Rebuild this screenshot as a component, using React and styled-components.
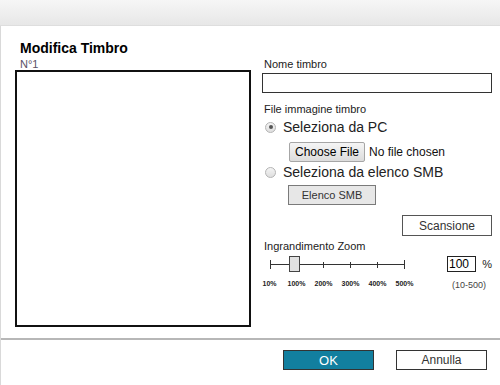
import React from "react";
import styled, { createGlobalStyle } from "styled-components";

const GlobalStyle = createGlobalStyle`
  html, body {
    margin: 0;
    padding: 0;
    background: #fff;
  }
  body {
    font-family: "Liberation Sans", Arial, sans-serif;
    color: #222;
  }
  * {
    box-sizing: border-box;
  }
`;

const Page = styled.div`
  width: 500px;
  height: 385px;
  display: flex;
  flex-direction: column;
  overflow: hidden;
`;

const TopBar = styled.div`
  height: 26px;
  flex: none;
  background: linear-gradient(#f6f6f6, #e7e7e7);
  border-bottom: 1px solid #dedede;
`;

const Body = styled.div`
  flex: 1;
  display: flex;
  flex-direction: column;
  border-left: 1px solid #d9d9d9;
`;

const Content = styled.div`
  padding: 14px 0 0 14px;
`;

const Title = styled.h1`
  margin: 0;
  padding-left: 5px;
  font-size: 14px;
  line-height: 16px;
  font-weight: bold;
  color: #000;
`;

const Columns = styled.div`
  display: grid;
  grid-template-columns: 236px 230px;
  column-gap: 11px;
`;

const LeftCol = styled.div`
  display: flex;
  flex-direction: column;
`;

const StampNumber = styled.div`
  margin-top: 2px;
  padding-left: 5px;
  font-size: 11px;
  line-height: 12px;
  color: #5a5266;
`;

const Preview = styled.div`
  width: 236px;
  height: 257px;
  border: 2px solid #111;
  background: #fff;
`;

const RightCol = styled.div`
  display: flex;
  flex-direction: column;
`;

const FieldLabel = styled.div`
  margin-top: ${(p) => p.$top || 0}px;
  padding-left: 2px;
  font-size: 11px;
  line-height: 12px;
  color: #222;
`;

const TextInput = styled.div`
  margin-top: 3px;
  height: 20px;
  border: 1px solid #333;
  background: #fff;
`;

const RadioRow = styled.div`
  margin-top: ${(p) => p.$top}px;
  display: flex;
  align-items: center;
  gap: 7px;
  padding-left: 3px;
  height: 16px;
  font-size: 14px;
  line-height: 16px;
  color: #222;
`;

const Radio = styled.span`
  position: relative;
  width: 11px;
  height: 11px;
  flex: none;
  border-radius: 50%;
  border: 1px solid #b4b4b4;
  background: linear-gradient(#f4f4f4, #dedede);

  &::after {
    content: "";
    display: ${(p) => (p.$checked ? "block" : "none")};
    position: absolute;
    left: 2.5px;
    top: 2.5px;
    width: 4px;
    height: 4px;
    border-radius: 50%;
    background: #555;
  }
`;

const FileRow = styled.div`
  margin-top: 7px;
  padding-left: 27px;
  display: flex;
  align-items: center;
  gap: 4px;
  font-size: 12px;
  color: #111;
`;

const NativeButton = styled.button`
  height: 20px;
  width: 76px;
  padding: 0;
  border: 1px solid #a6a6a6;
  border-radius: 2px;
  background: linear-gradient(#f5f5f5, #dcdcdc);
  font-family: "Liberation Sans", Arial, sans-serif;
  font-size: 12px;
  color: #000;
`;

const FlatButton = styled.button`
  width: ${(p) => p.$width}px;
  height: ${(p) => p.$height || 20}px;
  padding: 0;
  border: 1px solid ${(p) => p.$border || "#555"};
  background: ${(p) => p.$bg || "#fff"};
  font-family: "Liberation Sans", Arial, sans-serif;
  font-size: ${(p) => p.$size || 11}px;
  color: ${(p) => p.$color || "#333"};
`;

const SmbRow = styled.div`
  margin-top: 5px;
  padding-left: 26px;
`;

const ScanRow = styled.div`
  margin-top: 10px;
  display: flex;
  justify-content: flex-end;
`;

const ZoomGrid = styled.div`
  margin-top: 4px;
  display: grid;
  grid-template-columns: 1fr 45px;
`;

const SliderCol = styled.div`
  display: flex;
  flex-direction: column;
  padding-left: 7px;
`;

const Scale = styled.div`
  margin: 7px 0 0 -13px;
  display: grid;
  grid-template-columns: repeat(6, 27px);
  font-size: 7px;
  line-height: 8px;
  font-weight: bold;
  color: #222;
  text-align: center;
`;

const ZoomCol = styled.div`
  display: flex;
  flex-direction: column;
`;

const ZoomInputRow = styled.div`
  display: flex;
  align-items: center;
  gap: 6px;
  font-size: 11px;
  color: #222;
`;

const ZoomInput = styled.div`
  width: 32px;
  height: 16px;
  border: 1px solid #222;
  padding-left: 1px;
  font-size: 12px;
  line-height: 14px;
  color: #000;
`;

const Range = styled.div`
  margin-top: 8px;
  padding-left: 5px;
  font-size: 9px;
  line-height: 10px;
  color: #444;
`;

const Separator = styled.div`
  margin-top: 11px;
  height: 2px;
  background: #b7b7b7;
`;

const Footer = styled.div`
  padding: 10px 13px 0 0;
  display: flex;
  justify-content: flex-end;
  gap: 22px;
`;

const Slider = () => (
  <svg width="140" height="17" viewBox="0 0 140 17">
    <g stroke="#333" strokeWidth="1" shapeRendering="crispEdges">
      <line x1="1" y1="8.5" x2="136" y2="8.5" />
      <line x1="1.5" y1="4" x2="1.5" y2="13" />
      <line x1="135.5" y1="4" x2="135.5" y2="13" />
      {[54, 81, 108].map((x) => (
        <line key={x} x1={x + 0.5} y1="6" x2={x + 0.5} y2="12" />
      ))}
    </g>
    <rect x="20.5" y="0.5" width="10" height="15" fill="#e2e2e2" stroke="#444" />
  </svg>
);

const scaleLabels = ["10%", "100%", "200%", "300%", "400%", "500%"];

export default function App() {
  return (
    <Page>
      <GlobalStyle />
      <TopBar />
      <Body>
        <Content>
          <Title>Modifica Timbro</Title>
          <Columns>
            <LeftCol>
              <StampNumber>N°1</StampNumber>
              <Preview />
            </LeftCol>
            <RightCol>
              <FieldLabel $top={2}>Nome timbro</FieldLabel>
              <TextInput />
              <FieldLabel $top={10}>File immagine timbro</FieldLabel>
              <RadioRow $top={4}>
                <Radio $checked />
                Seleziona da PC
              </RadioRow>
              <FileRow>
                <NativeButton>Choose File</NativeButton>
                No file chosen
              </FileRow>
              <RadioRow $top={2}>
                <Radio />
                Seleziona da elenco SMB
              </RadioRow>
              <SmbRow>
                <FlatButton $width={88} $bg="#e7e7e7" $border="#7a7a7a">
                  Elenco SMB
                </FlatButton>
              </SmbRow>
              <ScanRow>
                <FlatButton $width={90} $height={21} $size={12}>
                  Scansione
                </FlatButton>
              </ScanRow>
              <FieldLabel $top={4}>Ingrandimento Zoom</FieldLabel>
              <ZoomGrid>
                <SliderCol>
                  <Slider />
                  <Scale>
                    {scaleLabels.map((l) => (
                      <span key={l}>{l}</span>
                    ))}
                  </Scale>
                </SliderCol>
                <ZoomCol>
                  <ZoomInputRow>
                    <ZoomInput>100</ZoomInput>%
                  </ZoomInputRow>
                  <Range>(10-500)</Range>
                </ZoomCol>
              </ZoomGrid>
            </RightCol>
          </Columns>
        </Content>
        <Separator />
        <Footer>
          <FlatButton $width={91} $bg="#127f9f" $border="#333" $color="#fff" $size={13}>
            OK
          </FlatButton>
          <FlatButton $width={91} $border="#333" $size={12}>
            Annulla
          </FlatButton>
        </Footer>
      </Body>
    </Page>
  );
}
